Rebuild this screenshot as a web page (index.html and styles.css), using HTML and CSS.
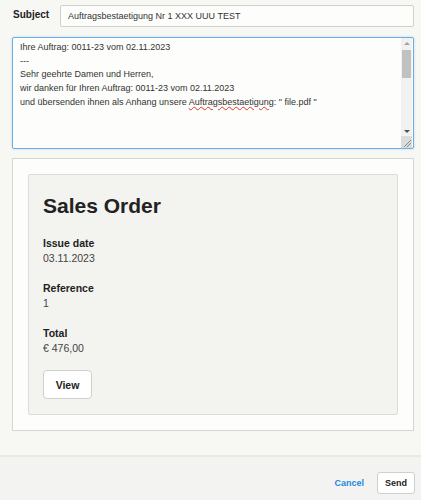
FILE: index.html
```html
<!DOCTYPE html>
<html lang="de">
<head>
<meta charset="utf-8">
<title>Send Sales Order</title>
<link rel="stylesheet" href="styles.css">
</head>
<body>
<div class="page">
  <div class="main">
    <div class="subject-row">
      <label class="subject-label">Subject</label>
      <div class="subject-input">Auftragsbestaetigung Nr 1 XXX UUU TEST</div>
    </div>
    <div class="textarea">
      <div class="textarea-text">
        <div>Ihre Auftrag: 0011-23 vom 02.11.2023</div>
        <div>---</div>
        <div>Sehr geehrte Damen und Herren,</div>
        <div>wir danken für Ihren Auftrag: 0011-23 vom 02.11.2023</div>
        <div>und übersenden ihnen als Anhang unsere <span class="misspelled">Auftragsbestaetigung</span>: " file.pdf "</div>
      </div>
      <div class="scrollbar">
        <div class="sb-arrow sb-up"></div>
        <div class="sb-thumb"></div>
        <div class="sb-track"></div>
        <div class="sb-arrow sb-down"></div>
        <div class="sb-grip">
          <svg width="11" height="11" viewBox="0 0 11 11"><path d="M10 3 L3 10 M10 6 L6 10" stroke="#8a8a8a" stroke-width="1" fill="none"/></svg>
        </div>
      </div>
    </div>
    <div class="preview">
      <div class="order-card">
        <h1 class="order-title">Sales Order</h1>
        <div class="field">
          <div class="field-label">Issue date</div>
          <div class="field-value">03.11.2023</div>
        </div>
        <div class="field">
          <div class="field-label">Reference</div>
          <div class="field-value">1</div>
        </div>
        <div class="field">
          <div class="field-label">Total</div>
          <div class="field-value">€ 476,00</div>
        </div>
        <button class="view-btn">View</button>
      </div>
    </div>
  </div>
  <div class="footer">
    <a class="cancel-link">Cancel</a>
    <button class="send-btn">Send</button>
  </div>
</div>
</body>
</html>
```

FILE: styles.css
```css
html, body {
  margin: 0;
  padding: 0;
}
body {
  background: #f7f7f4;
  font-family: "Liberation Sans", Arial, sans-serif;
  color: #333;
  width: 421px;
  height: 500px;
  overflow: hidden;
}
.page {
  display: flex;
  flex-direction: column;
  height: 500px;
}
.main {
  flex: 1;
  padding: 5px 7px 0 12px;
}
.subject-row {
  display: flex;
  align-items: center;
}
.subject-label {
  font-size: 10px;
  font-weight: bold;
  color: #222;
  width: 47px;
  padding-left: 1px;
  margin-top: -3px;
}
.subject-input {
  flex: 1;
  height: 20px;
  line-height: 20px;
  border: 1px solid #cfcfcc;
  border-radius: 2px;
  background: #fdfdfb;
  font-size: 9px;
  color: #333;
  padding-left: 7px;
}
.textarea {
  margin-top: 10px;
  height: 110px;
  border: 1px solid #6aaee8;
  border-radius: 2px;
  background: #fdfdfb;
  box-shadow: 0 0 2px rgba(102, 175, 233, 0.5);
  display: flex;
}
.textarea-text {
  flex: 1;
  padding: 3px 7px 0 7px;
  font-size: 9px;
  line-height: 13.7px;
  color: #333;
}
.misspelled {
  text-decoration: underline wavy #e03030;
  text-decoration-thickness: 1px;
  text-underline-offset: 1px;
}
.scrollbar {
  width: 11px;
  margin-right: 1px;
  display: flex;
  flex-direction: column;
  background: #f1f1f0;
}
.sb-arrow {
  height: 10px;
  display: flex;
  align-items: center;
  justify-content: center;
}
.sb-up::before {
  content: "";
  border-left: 3px solid transparent;
  border-right: 3px solid transparent;
  border-bottom: 3px solid #a3a3a3;
}
.sb-down::before {
  content: "";
  border-left: 3px solid transparent;
  border-right: 3px solid transparent;
  border-top: 3px solid #505050;
}
.sb-thumb {
  height: 28px;
  margin: 2px 1px 0;
  background: #c1c1c1;
}
.sb-track {
  flex: 1;
}
.sb-grip {
  height: 12px;
  background: #dcdcdc;
  display: flex;
  align-items: flex-end;
  justify-content: flex-end;
}
.sb-grip svg {
  display: block;
}
.preview {
  margin-top: 9px;
  border: 1px solid #d6d6d2;
  background: #fdfdfb;
  padding: 15px;
}
.order-card {
  background: #f3f3f0;
  border: 1px solid #dcdcd8;
  border-radius: 2px;
  padding: 18px 14px 15px;
}
.order-title {
  margin: 0 0 17px;
  font-size: 21px;
  line-height: 26px;
  font-weight: bold;
  color: #222;
}
.field + .field {
  margin-top: 15px;
}
.field-label {
  font-size: 10.5px;
  line-height: 15px;
  font-weight: bold;
  color: #222;
}
.field-value {
  font-size: 10.5px;
  line-height: 15px;
  color: #444;
}
.view-btn {
  display: block;
  margin-top: 14px;
  width: 49px;
  height: 29px;
  background: #fff;
  border: 1px solid #cfcfcc;
  border-radius: 4px;
  font-family: "Liberation Sans", Arial, sans-serif;
  font-size: 10.5px;
  font-weight: bold;
  color: #222;
  padding: 0;
}
.footer {
  height: 43px;
  border-top: 2px solid #e8e8e5;
  background: #f3f3f1;
  display: flex;
  align-items: flex-start;
  justify-content: flex-end;
  padding: 15px 6px 0 0;
  box-sizing: border-box;
  height: 45px;
}
.cancel-link {
  font-size: 9px;
  font-weight: bold;
  color: #1f88e0;
  line-height: 22px;
  margin-right: 13px;
}
.send-btn {
  width: 38px;
  height: 22px;
  background: #fff;
  border: 1px solid #cfcfcc;
  border-radius: 3px;
  font-family: "Liberation Sans", Arial, sans-serif;
  font-size: 9px;
  font-weight: bold;
  color: #222;
  padding: 0;
}
```
